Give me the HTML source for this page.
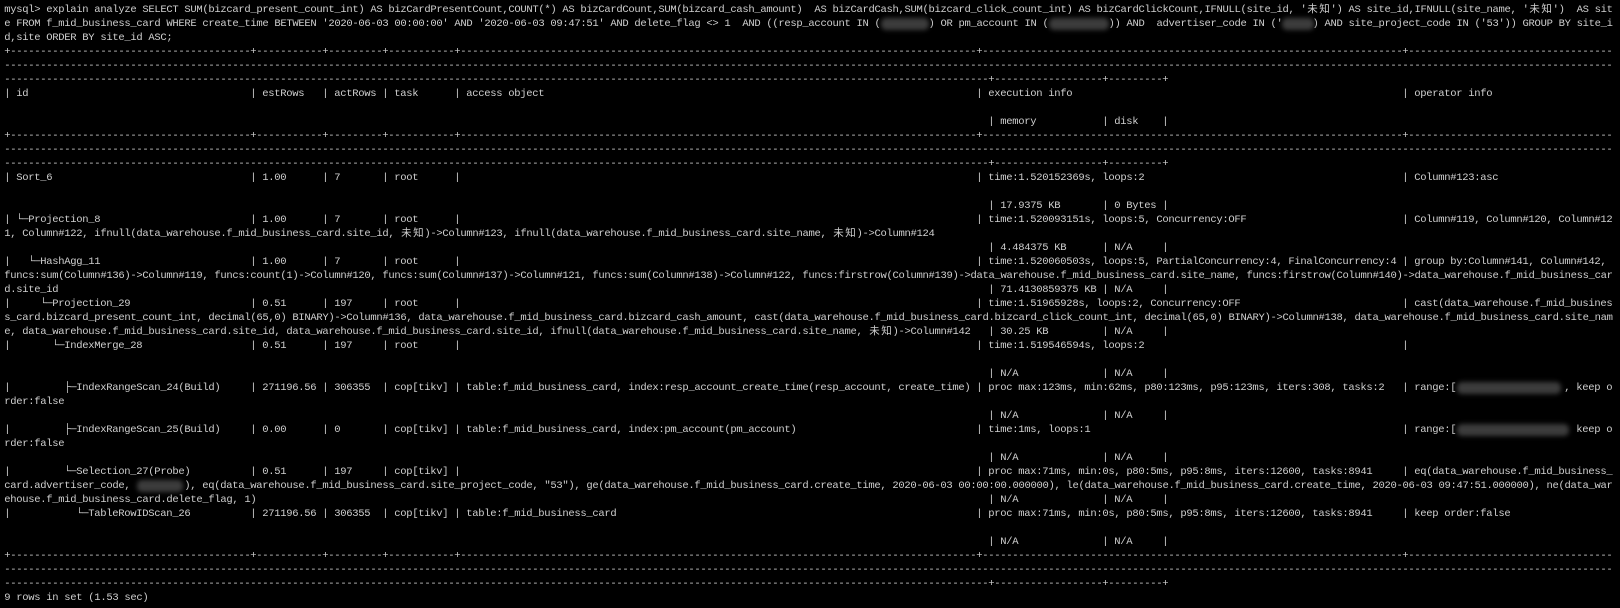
<!DOCTYPE html>
<html><head><meta charset="utf-8"><style>
html,body{margin:0;padding:0;background:#000;}
body{width:1620px;height:608px;overflow:hidden;position:relative;}
.l{position:absolute;left:4.3px;height:14px;width:1616px;}
.l>b{position:absolute;top:0;white-space:pre;font:10.5px/14px "Liberation Mono","DejaVu Sans Mono",monospace;letter-spacing:-0.3px;color:#cfcfcf;font-weight:normal;}
i{font-style:normal;display:inline-block;width:12px;text-align:center;font-family:"Liberation Sans","Noto Sans CJK SC",sans-serif;font-size:10.5px;line-height:12px;vertical-align:top;letter-spacing:0;}
.bl{position:absolute;background:#3c3c3c;filter:blur(2.5px);border-radius:5px;height:12px;}
</style></head><body>

<div class="l" style="top:3px"><b style="left:0">mysql&gt; explain analyze SELECT SUM(bizcard_present_count_int) AS bizCardPresentCount,COUNT(*) AS bizCardCount,SUM(bizcard_cash_amount)  AS bizCardCash,SUM(bizcard_click_count_int) AS bizCardClickCount,IFNULL(site_id, '<i>未</i><i>知</i>') AS site_id,IFNULL(site_name, '<i>未</i><i>知</i>')  AS sit</b></div>
<div class="l" style="top:17px"><b style="left:0">e FROM f_mid_business_card WHERE create_time BETWEEN '2020-06-03 00:00:00' AND '2020-06-03 09:47:51' AND delete_flag &lt;&gt; 1  AND ((resp_account IN (        ) OR pm_account IN (          )) AND  advertiser_code IN ('     ) AND site_project_code IN ('53')) GROUP BY site_i</b></div>
<div class="l" style="top:31px"><b style="left:0">d,site ORDER BY site_id ASC;</b></div>

<div class="l" style="top:45px"><b style="left:0">+----------------------------------------</b><b style="left:246px">+-----------</b><b style="left:318px">+---------</b><b style="left:378px">+-----------</b><b style="left:450px">+----------------------------------------</b><b style="left:696px">----------------------------------------</b><b style="left:936px">------</b><b style="left:972px">+----------------------------------------</b><b style="left:1218px">------------------------------</b><b style="left:1398px">+----------------------------------</b></div>
<div class="l" style="top:59px"><b style="left:0">----------------------------------------</b><b style="left:240px">----------------------------------------</b><b style="left:480px">----------------------------------------</b><b style="left:720px">----------------------------------------</b><b style="left:960px">----------------------------------------</b><b style="left:1200px">----------------------------------------</b><b style="left:1440px">----------------------------</b></div>
<div class="l" style="top:73px"><b style="left:0">----------------------------------------</b><b style="left:240px">----------------------------------------</b><b style="left:480px">----------------------------------------</b><b style="left:720px">----------------------------------------</b><b style="left:960px">----</b><b style="left:984px">+------------------</b><b style="left:1098px">+---------</b><b style="left:1158px">+</b></div>

<div class="l" style="top:87px"><b style="left:0">| id</b><b style="left:246px">| estRows</b><b style="left:318px">| actRows</b><b style="left:378px">| task</b><b style="left:450px">| access object</b><b style="left:972px">| execution info</b><b style="left:1398px">| operator info</b></div>
<div class="l" style="top:115px"><b style="left:984px">| memory</b><b style="left:1098px">| disk</b><b style="left:1158px">|</b></div>

<div class="l" style="top:129px"><b style="left:0">+----------------------------------------</b><b style="left:246px">+-----------</b><b style="left:318px">+---------</b><b style="left:378px">+-----------</b><b style="left:450px">+----------------------------------------</b><b style="left:696px">----------------------------------------</b><b style="left:936px">------</b><b style="left:972px">+----------------------------------------</b><b style="left:1218px">------------------------------</b><b style="left:1398px">+----------------------------------</b></div>
<div class="l" style="top:143px"><b style="left:0">----------------------------------------</b><b style="left:240px">----------------------------------------</b><b style="left:480px">----------------------------------------</b><b style="left:720px">----------------------------------------</b><b style="left:960px">----------------------------------------</b><b style="left:1200px">----------------------------------------</b><b style="left:1440px">----------------------------</b></div>
<div class="l" style="top:157px"><b style="left:0">----------------------------------------</b><b style="left:240px">----------------------------------------</b><b style="left:480px">----------------------------------------</b><b style="left:720px">----------------------------------------</b><b style="left:960px">----</b><b style="left:984px">+------------------</b><b style="left:1098px">+---------</b><b style="left:1158px">+</b></div>

<div class="l" style="top:171px"><b style="left:0">| Sort_6</b><b style="left:246px">| 1.00</b><b style="left:318px">| 7</b><b style="left:378px">| root</b><b style="left:450px">|</b><b style="left:972px">| time:1.520152369s, loops:2</b><b style="left:1398px">| Column#123:asc</b></div>
<div class="l" style="top:199px"><b style="left:984px">| 17.9375 KB</b><b style="left:1098px">| 0 Bytes</b><b style="left:1158px">|</b></div>

<div class="l" style="top:213px"><b style="left:0">|</b><b style="left:12px">└─Projection_8</b><b style="left:246px">| 1.00</b><b style="left:318px">| 7</b><b style="left:378px">| root</b><b style="left:450px">|</b><b style="left:972px">| time:1.520093151s, loops:5, Concurrency:OFF</b><b style="left:1398px">| Column#119, Column#120, Column#12</b></div>
<div class="l" style="top:227px"><b style="left:0">1, Column#122, ifnull(data_warehouse.f_mid_business_card.site_id, <i>未</i><i>知</i>)-&gt;Column#123, ifnull(data_warehouse.f_mid_business_card.site_name, <i>未</i><i>知</i>)-&gt;Column#124</b></div>
<div class="l" style="top:241px"><b style="left:984px">| 4.484375 KB</b><b style="left:1098px">| N/A</b><b style="left:1158px">|</b></div>

<div class="l" style="top:255px"><b style="left:0">|</b><b style="left:24px">└─HashAgg_11</b><b style="left:246px">| 1.00</b><b style="left:318px">| 7</b><b style="left:378px">| root</b><b style="left:450px">|</b><b style="left:972px">| time:1.520060503s, loops:5, PartialConcurrency:4, FinalConcurrency:4</b><b style="left:1398px">| group by:Column#141, Column#142,</b></div>
<div class="l" style="top:269px"><b style="left:0">funcs:sum(Column#136)-&gt;Column#119, funcs:count(1)-&gt;Column#120, funcs:sum(Column#137)-&gt;Column#121, funcs:sum(Column#138)-&gt;Column#122, funcs:firstrow(Column#139)-&gt;data_warehouse.f_mid_business_card.site_name, funcs:firstrow(Column#140)-&gt;data_warehouse.f_mid_business_car</b></div>
<div class="l" style="top:283px"><b style="left:0">d.site_id</b><b style="left:984px">| 71.4130859375 KB</b><b style="left:1098px">| N/A</b><b style="left:1158px">|</b></div>

<div class="l" style="top:297px"><b style="left:0">|</b><b style="left:36px">└─Projection_29</b><b style="left:246px">| 0.51</b><b style="left:318px">| 197</b><b style="left:378px">| root</b><b style="left:450px">|</b><b style="left:972px">| time:1.51965928s, loops:2, Concurrency:OFF</b><b style="left:1398px">| cast(data_warehouse.f_mid_busines</b></div>
<div class="l" style="top:311px"><b style="left:0">s_card.bizcard_present_count_int, decimal(65,0) BINARY)-&gt;Column#136, data_warehouse.f_mid_business_card.bizcard_cash_amount, cast(data_warehouse.f_mid_business_card.bizcard_click_count_int, decimal(65,0) BINARY)-&gt;Column#138, data_warehouse.f_mid_business_card.site_nam</b></div>
<div class="l" style="top:325px"><b style="left:0">e, data_warehouse.f_mid_business_card.site_id, data_warehouse.f_mid_business_card.site_id, ifnull(data_warehouse.f_mid_business_card.site_name, <i>未</i><i>知</i>)-&gt;Column#142</b><b style="left:984px">| 30.25 KB</b><b style="left:1098px">| N/A</b><b style="left:1158px">|</b></div>

<div class="l" style="top:339px"><b style="left:0">|</b><b style="left:48px">└─IndexMerge_28</b><b style="left:246px">| 0.51</b><b style="left:318px">| 197</b><b style="left:378px">| root</b><b style="left:450px">|</b><b style="left:972px">| time:1.519546594s, loops:2</b><b style="left:1398px">|</b></div>
<div class="l" style="top:367px"><b style="left:984px">| N/A</b><b style="left:1098px">| N/A</b><b style="left:1158px">|</b></div>

<div class="l" style="top:381px"><b style="left:0">|</b><b style="left:60px">├─IndexRangeScan_24(Build)</b><b style="left:246px">| 271196.56</b><b style="left:318px">| 306355</b><b style="left:378px">| cop[tikv]</b><b style="left:450px">| table:f_mid_business_card, index:resp_account_create_time(resp_account, create_time)</b><b style="left:972px">| proc max:123ms, min:62ms, p80:123ms, p95:123ms, iters:308, tasks:2</b><b style="left:1398px">| range:[</b><b style="left:1560px">, keep o</b></div>
<div class="l" style="top:395px"><b style="left:0">rder:false</b></div>
<div class="l" style="top:409px"><b style="left:984px">| N/A</b><b style="left:1098px">| N/A</b><b style="left:1158px">|</b></div>

<div class="l" style="top:423px"><b style="left:0">|</b><b style="left:60px">├─IndexRangeScan_25(Build)</b><b style="left:246px">| 0.00</b><b style="left:318px">| 0</b><b style="left:378px">| cop[tikv]</b><b style="left:450px">| table:f_mid_business_card, index:pm_account(pm_account)</b><b style="left:972px">| time:1ms, loops:1</b><b style="left:1398px">| range:[</b><b style="left:1572px">keep o</b></div>
<div class="l" style="top:437px"><b style="left:0">rder:false</b></div>
<div class="l" style="top:451px"><b style="left:984px">| N/A</b><b style="left:1098px">| N/A</b><b style="left:1158px">|</b></div>

<div class="l" style="top:465px"><b style="left:0">|</b><b style="left:60px">└─Selection_27(Probe)</b><b style="left:246px">| 0.51</b><b style="left:318px">| 197</b><b style="left:378px">| cop[tikv]</b><b style="left:450px">|</b><b style="left:972px">| proc max:71ms, min:0s, p80:5ms, p95:8ms, iters:12600, tasks:8941</b><b style="left:1398px">| eq(data_warehouse.f_mid_business_</b></div>
<div class="l" style="top:479px"><b style="left:0">card.advertiser_code, </b><b style="left:180px">), eq(data_warehouse.f_mid_business_card.site_project_code, "53"), ge(data_warehouse.f_mid_business_card.create_time, 2020-06-03 00:00:00.000000), le(data_warehouse.f_mid_business_card.create_time, 2020-06-03 09:47:51.000000), ne(data_war</b></div>
<div class="l" style="top:493px"><b style="left:0">ehouse.f_mid_business_card.delete_flag, 1)</b><b style="left:984px">| N/A</b><b style="left:1098px">| N/A</b><b style="left:1158px">|</b></div>

<div class="l" style="top:507px"><b style="left:0">|</b><b style="left:72px">└─TableRowIDScan_26</b><b style="left:246px">| 271196.56</b><b style="left:318px">| 306355</b><b style="left:378px">| cop[tikv]</b><b style="left:450px">| table:f_mid_business_card</b><b style="left:972px">| proc max:71ms, min:0s, p80:5ms, p95:8ms, iters:12600, tasks:8941</b><b style="left:1398px">| keep order:false</b></div>
<div class="l" style="top:535px"><b style="left:984px">| N/A</b><b style="left:1098px">| N/A</b><b style="left:1158px">|</b></div>

<div class="l" style="top:549px"><b style="left:0">+----------------------------------------</b><b style="left:246px">+-----------</b><b style="left:318px">+---------</b><b style="left:378px">+-----------</b><b style="left:450px">+----------------------------------------</b><b style="left:696px">----------------------------------------</b><b style="left:936px">------</b><b style="left:972px">+----------------------------------------</b><b style="left:1218px">------------------------------</b><b style="left:1398px">+----------------------------------</b></div>
<div class="l" style="top:563px"><b style="left:0">----------------------------------------</b><b style="left:240px">----------------------------------------</b><b style="left:480px">----------------------------------------</b><b style="left:720px">----------------------------------------</b><b style="left:960px">----------------------------------------</b><b style="left:1200px">----------------------------------------</b><b style="left:1440px">----------------------------</b></div>
<div class="l" style="top:577px"><b style="left:0">----------------------------------------</b><b style="left:240px">----------------------------------------</b><b style="left:480px">----------------------------------------</b><b style="left:720px">----------------------------------------</b><b style="left:960px">----</b><b style="left:984px">+------------------</b><b style="left:1098px">+---------</b><b style="left:1158px">+</b></div>
<div class="l" style="top:591px"><b style="left:0">9 rows in set (1.53 sec)</b></div>

<div class="bl" style="left:881px;top:18px;width:48px"></div>
<div class="bl" style="left:1049px;top:18px;width:60px"></div>
<div class="bl" style="left:1282px;top:18px;width:32px"></div>
<div class="bl" style="left:1457px;top:382px;width:104px"></div>
<div class="bl" style="left:1457px;top:424px;width:112px"></div>
<div class="bl" style="left:137px;top:480px;width:46px"></div>
</body></html>
